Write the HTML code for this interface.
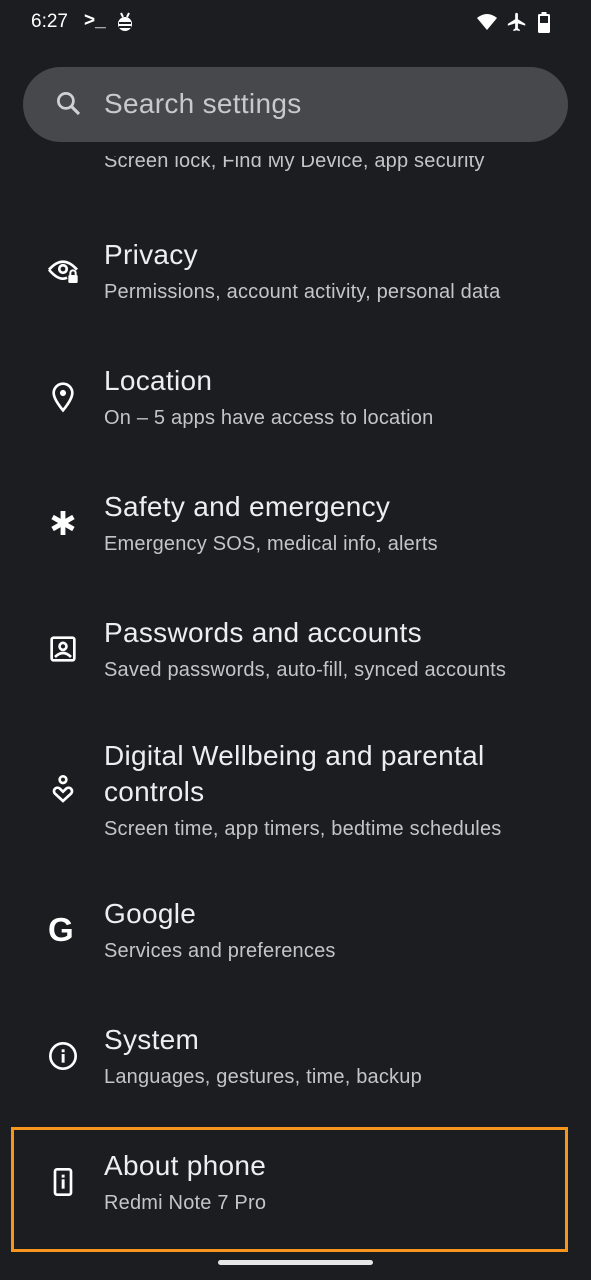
<!DOCTYPE html>
<html><head><style>
body{margin:0;width:591px;height:1280px;background:#1c1d20;font-family:"Liberation Sans",sans-serif;position:relative;overflow:hidden;color:#e6e7eb}
.a{position:absolute}
.t{position:absolute;left:104px;font-size:28px;letter-spacing:0.3px;color:#eceef2;white-space:nowrap}
.s{position:absolute;left:104px;font-size:20px;letter-spacing:0.2px;color:#c3c5ca;white-space:nowrap}
svg.i{position:absolute;left:47px;width:32px;height:32px}
</style></head><body>
<div class="a" style="left:31px;top:11px;font-size:19px;color:#fff">6:27</div>
<div class="a" style="left:84px;top:10px;font-size:19px;color:#fff;font-weight:bold">&gt;_</div>
<svg class="a" style="left:115px;top:11px" width="20" height="22" viewBox="0 0 20 22"><ellipse cx="10" cy="13" rx="7" ry="7" fill="#fff"/><rect x="4" y="11" width="12" height="2" fill="#1c1d20"/><rect x="4" y="15" width="12" height="2" fill="#1c1d20"/><line x1="6" y1="2" x2="8" y2="6" stroke="#fff" stroke-width="2"/><line x1="14" y1="2" x2="12" y2="6" stroke="#fff" stroke-width="2"/></svg>
<svg class="a" style="left:476px;top:13px" width="22" height="18" viewBox="0 0 22 18"><path d="M1 5 Q11 -3 21 5 L11 17 Z" fill="#fff"/></svg>
<svg class="a" style="left:506px;top:11px" width="22" height="22" viewBox="0 0 24 24"><path d="M21 16v-2l-8-5V3.5a1.5 1.5 0 0 0-3 0V9l-8 5v2l8-2.5V19l-2 1.5V22l3.5-1 3.5 1v-1.5L13 19v-5.5z" fill="#fff"/></svg>
<svg class="a" style="left:538px;top:12px" width="12" height="21" viewBox="0 0 12 21"><rect x="3.5" y="0" width="5" height="3" fill="#fff"/><rect x="0" y="2" width="12" height="19" rx="1.5" fill="#fff"/><rect x="2" y="4" width="8" height="7" fill="#1c1d20"/></svg>
<div class="s" style="top:150px">Screen lock, Find My Device, app security</div>
<div class="a" style="left:0;top:142px;width:591px;height:14px;background:#1c1d20"></div>
<div class="a" style="left:23px;top:67px;width:545px;height:75px;border-radius:38px;background:#46484b"></div>
<svg class="a" style="left:54px;top:89px" width="30" height="30" viewBox="0 0 24 24"><circle cx="9.5" cy="9.5" r="6" fill="none" stroke="#cfd1d5" stroke-width="2.2"/><line x1="14" y1="14" x2="20" y2="20" stroke="#cfd1d5" stroke-width="2.5"/></svg>
<div class="a" style="left:104px;top:88px;font-size:28px;letter-spacing:0.3px;color:#c7c9cd">Search settings</div>

<svg class="i" style="top:255px" viewBox="0 0 24 24"><path d="M1.5 11Q12 -1 22.5 11" fill="none" stroke="#fff" stroke-width="2"/><path d="M1.5 11Q9 20 15 17" fill="none" stroke="#fff" stroke-width="2"/><circle cx="12" cy="10.5" r="2.8" fill="none" stroke="#fff" stroke-width="2"/><rect x="16" y="15" width="7" height="6" rx="1" fill="#fff"/><path d="M17.5 15v-1.5a2 2 0 0 1 4 0V15" fill="none" stroke="#fff" stroke-width="1.5"/></svg>
<div class="t" style="top:239px">Privacy</div><div class="s" style="top:281px">Permissions, account activity, personal data</div>

<svg class="i" style="top:381px" viewBox="0 0 24 24"><path d="M12 2a7 7 0 0 0-7 7c0 5 7 13 7 13s7-8 7-13a7 7 0 0 0-7-7z" fill="none" stroke="#fff" stroke-width="2"/><circle cx="12" cy="9" r="2.3" fill="#fff"/></svg>
<div class="t" style="top:365px">Location</div><div class="s" style="top:407px">On – 5 apps have access to location</div>

<svg class="i" style="top:507px" viewBox="0 0 24 24"><g stroke="#fff" stroke-width="3.6"><line x1="12" y1="3" x2="12" y2="21"/><line x1="4.2" y1="7.5" x2="19.8" y2="16.5"/><line x1="4.2" y1="16.5" x2="19.8" y2="7.5"/></g></svg>
<div class="t" style="top:491px">Safety and emergency</div><div class="s" style="top:533px">Emergency SOS, medical info, alerts</div>

<svg class="i" style="top:633px" viewBox="0 0 24 24"><rect x="3.5" y="3.5" width="17" height="17" rx="1.5" fill="none" stroke="#fff" stroke-width="2"/><circle cx="12" cy="10" r="2.6" fill="none" stroke="#fff" stroke-width="2"/><path d="M6 18q6-6 12 0" fill="none" stroke="#fff" stroke-width="2"/></svg>
<div class="t" style="top:617px">Passwords and accounts</div><div class="s" style="top:659px">Saved passwords, auto-fill, synced accounts</div>

<svg class="i" style="top:773px" viewBox="0 0 24 24"><circle cx="12" cy="5" r="2.5" fill="none" stroke="#fff" stroke-width="2"/><path d="M12 21l-6-5.5a2.6 2.6 0 0 1 3.7-3.7L12 14l2.3-2.2a2.6 2.6 0 0 1 3.7 3.7z" fill="none" stroke="#fff" stroke-width="2"/></svg>
<div class="t" style="top:740px">Digital Wellbeing and parental</div><div class="t" style="top:776px">controls</div><div class="s" style="top:818px">Screen time, app timers, bedtime schedules</div>

<div class="a" style="left:48px;top:911px;font-size:33px;font-weight:bold;color:#fff">G</div>
<div class="t" style="top:898px">Google</div><div class="s" style="top:940px">Services and preferences</div>

<svg class="i" style="top:1040px" viewBox="0 0 24 24"><circle cx="12" cy="12" r="9.5" fill="none" stroke="#fff" stroke-width="2"/><rect x="11" y="10.5" width="2.2" height="6.5" fill="#fff"/><rect x="11" y="7" width="2.2" height="2.2" fill="#fff"/></svg>
<div class="t" style="top:1024px">System</div><div class="s" style="top:1066px">Languages, gestures, time, backup</div>

<svg class="i" style="top:1166px" viewBox="0 0 24 24"><rect x="6" y="2.5" width="12" height="19" rx="1.5" fill="none" stroke="#fff" stroke-width="2"/><rect x="11" y="10" width="2.2" height="7" fill="#fff"/><rect x="11" y="6.5" width="2.2" height="2.2" fill="#fff"/></svg>
<div class="t" style="top:1150px">About phone</div><div class="s" style="top:1192px">Redmi Note 7 Pro</div>

<div class="a" style="left:11px;top:1127px;width:551px;height:119px;border:3px solid #f7961c"></div>
<div class="a" style="left:218px;top:1260px;width:155px;height:5px;border-radius:3px;background:#e6e6e6"></div>
</body></html>
